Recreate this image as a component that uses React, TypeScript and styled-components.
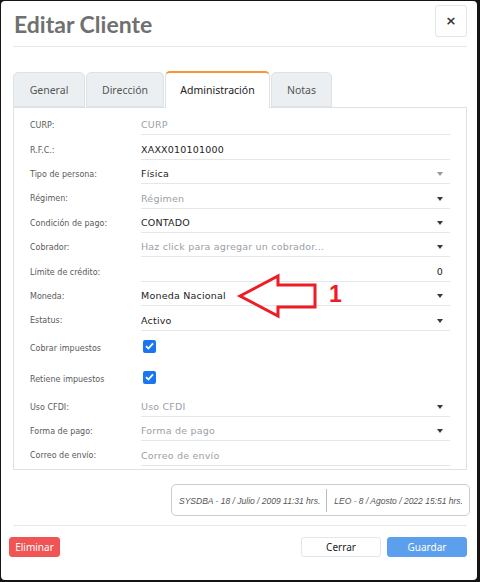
import React from 'react';
import styled, { createGlobalStyle } from 'styled-components';

const GlobalStyle = createGlobalStyle`
    html, body {
        margin: 0;
        padding: 0;
        background: #141414;
    }
    * {
        box-sizing: border-box;
    }
`;

const Backdrop = styled.div`
    width: 480px;
    height: 582px;
    padding: 1px 3px 2px 1px;
`;

const Modal = styled.div`
    position: relative;
    height: 100%;
    background: #fff;
    border-radius: 4px;
    padding: 0 10px 0 12px;
    display: flex;
    flex-direction: column;
`;

const Header = styled.div`
    display: flex;
    justify-content: space-between;
    align-items: flex-start;
    height: 46px;
    border-bottom: 1px solid #e6e9eb;
`;

const Title = styled.h1`
    margin: 9px 0 0 1px;
    font-family: Lato, "Open Sans", sans-serif;
    font-size: 23px;
    font-weight: 700;
    color: #707070;
    letter-spacing: 0;
`;

const CloseButton = styled.button`
    margin: 4px 0 0 0;
    width: 32px;
    height: 32px;
    border: 1px solid #e4e4e4;
    border-radius: 3px;
    background: #fff;
    font-family: "DejaVu Sans", sans-serif;
    font-size: 13px;
    font-weight: 700;
    color: #333;
    padding: 0;
    line-height: 30px;
`;

const Tabs = styled.div`
    display: flex;
    gap: 1px;
    margin-top: 24px;
    height: 36px;
    align-items: flex-end;
`;

const Tab = styled.div<{ $active?: boolean; $w: number }>`
    width: ${p => p.$w}px;
    height: ${p => (p.$active ? 37 : 35)}px;
    margin-bottom: ${p => (p.$active ? -1 : 0)}px;
    position: relative;
    z-index: ${p => (p.$active ? 2 : 1)};
    display: flex;
    align-items: center;
    justify-content: center;
    padding-bottom: ${p => (p.$active ? 2 : 0)}px;
    background: ${p => (p.$active ? '#fff' : '#eceff1')};
    border: 1px solid #dce2e5;
    border-top: ${p => (p.$active ? '2px solid #fb9533' : '1px solid #dce2e5')};
    border-bottom: ${p => (p.$active ? 'none' : '1px solid #dce2e5')};
    border-radius: 5px 5px 0 0;
    font-family: "Noto Sans", sans-serif;
    font-size: 10.5px;
    color: ${p => (p.$active ? '#222' : '#555')};
`;

const Panel = styled.div`
    border: 1px solid #dce2e5;
    height: 363px;
    padding: 3px 16px 0 16px;
`;

const Row = styled.div<{ $h?: number }>`
    display: grid;
    grid-template-columns: 111px 1fr;
    height: ${p => p.$h ?? 24.4}px;
    align-items: center;
`;

const Label = styled.div`
    font-family: "DejaVu Sans", sans-serif;
    font-size: 8px;
    color: #5a5a5a;
    padding-top: 5px;
    white-space: nowrap;
`;

const Field = styled.div<{ $placeholder?: boolean; $align?: string }>`
    height: 100%;
    display: flex;
    align-items: flex-end;
    justify-content: ${p => p.$align ?? 'space-between'};
    border-bottom: 1px solid #e3e7e8;
    padding: 0 7px 3px 0;
    font-family: "DejaVu Sans", sans-serif;
    font-size: 9.5px;
    letter-spacing: 0.2px;
    line-height: 12px;
    color: ${p => (p.$placeholder ? '#9aa0a6' : '#1d1d1d')};
`;

const Caret = styled.span<{ $light?: boolean }>`
    width: 0;
    height: 0;
    margin-bottom: 4px;
    border-left: 3.5px solid transparent;
    border-right: 3.5px solid transparent;
    border-top: 4px solid ${p => (p.$light ? '#9a9a9a' : '#3a3a3a')};
`;

const CheckBox = styled.span`
    width: 13px;
    height: 13px;
    margin-left: 2px;
    border-radius: 2px;
    background: #1976f2;
    display: flex;
    align-items: center;
    justify-content: center;
`;

const AuditBox = styled.div`
    align-self: flex-end;
    margin: 14px -3px 0 0;
    width: 299px;
    height: 32px;
    border: 1px solid #c9cdcf;
    border-radius: 5px;
    display: flex;
    align-items: center;
    font-family: "Liberation Sans", Arial, sans-serif;
    font-style: italic;
    font-size: 8.5px;
    color: #555;
`;

const AuditPart = styled.div<{ $divider?: boolean }>`
    flex: ${p => (p.$divider ? 1 : 'none')};
    text-align: center;
    white-space: nowrap;
    padding: 1px 6px 0 7px;
    border-left: ${p => (p.$divider ? '1px solid #bbb' : 'none')};
    line-height: 22px;
`;

const Footer = styled.div`
    margin-top: 9px;
    border-top: 1px solid #e6e9eb;
    padding-top: 11px;
    display: flex;
    align-items: center;
`;

const Button = styled.button<{ $kind: 'danger' | 'default' | 'primary' }>`
    height: 20px;
    width: ${p => (p.$kind === 'danger' ? 51 : 80)}px;
    margin-left: ${p => (p.$kind === 'danger' ? '-4px' : p.$kind === 'primary' ? '6px' : 'auto')};
    border-radius: 3px;
    padding: 0;
    font-family: "Noto Sans", sans-serif;
    font-size: 10px;
    border: 1px solid ${p => (p.$kind === 'danger' ? '#f05455' : p.$kind === 'primary' ? '#5c9fec' : '#e3e6e8')};
    background: ${p => (p.$kind === 'danger' ? '#f05455' : p.$kind === 'primary' ? '#5c9fec' : '#fff')};
    color: ${p => (p.$kind === 'default' ? '#222' : '#fff')};
`;

const Annotation = styled.svg`
    position: absolute;
    left: 226px;
    top: 264px;
    overflow: visible;
`;

const AnnotationNumber = styled.text`
    font-family: "Liberation Sans", Arial, sans-serif;
    font-size: 23px;
    font-weight: 700;
    fill: #ee1c25;
`;

type FieldDef = {
    label: string;
    value: string;
    placeholder?: boolean;
    caret?: boolean;
    lightCaret?: boolean;
    align?: string;
};

const topFields: FieldDef[] = [
    { label: 'CURP:', value: 'CURP', placeholder: true },
    { label: 'R.F.C.:', value: 'XAXX010101000' },
    { label: 'Tipo de persona:', value: 'Física', caret: true, lightCaret: true },
    { label: 'Régimen:', value: 'Régimen', placeholder: true, caret: true },
    { label: 'Condición de pago:', value: 'CONTADO', caret: true },
    { label: 'Cobrador:', value: 'Haz click para agregar un cobrador...', placeholder: true, caret: true },
    { label: 'Límite de crédito:', value: '0', align: 'flex-end' },
    { label: 'Moneda:', value: 'Moneda Nacional', caret: true },
    { label: 'Estatus:', value: 'Activo', caret: true },
];

const bottomFields: FieldDef[] = [
    { label: 'Uso CFDI:', value: 'Uso CFDI', placeholder: true, caret: true },
    { label: 'Forma de pago:', value: 'Forma de pago', placeholder: true, caret: true },
    { label: 'Correo de envío:', value: 'Correo de envío', placeholder: true },
];

const FieldRow: React.FC<{ f: FieldDef }> = ({ f }) => (
    <Row>
        <Label>{f.label}</Label>
        <Field $placeholder={f.placeholder} $align={f.align}>
            <span>{f.value}</span>
            {f.caret && <Caret $light={f.lightCaret} />}
        </Field>
    </Row>
);

const Check = () => (
    <CheckBox>
        <svg width="9" height="8" viewBox="0 0 9 8">
            <path d="M1 4.2 L3.4 6.5 L8 1.3" fill="none" stroke="#fff" strokeWidth="1.8" />
        </svg>
    </CheckBox>
);

export default function App() {
    return (
        <>
            <GlobalStyle />
            <Backdrop>
                <Modal>
                    <Header>
                        <Title>Editar Cliente</Title>
                        <CloseButton type="button" aria-label="Close">×</CloseButton>
                    </Header>

                    <Tabs>
                        <Tab $w={72}>General</Tab>
                        <Tab $w={78}>Dirección</Tab>
                        <Tab $w={105} $active>Administración</Tab>
                        <Tab $w={61}>Notas</Tab>
                    </Tabs>

                    <Panel>
                        {topFields.map(f => <FieldRow key={f.label} f={f} />)}
                        <Row $h={31}>
                            <Label>Cobrar impuestos</Label>
                            <div><Check /></div>
                        </Row>
                        <Row $h={31}>
                            <Label>Retiene impuestos</Label>
                            <div><Check /></div>
                        </Row>
                        {bottomFields.map(f => <FieldRow key={f.label} f={f} />)}
                    </Panel>

                    <AuditBox>
                        <AuditPart>SYSDBA - 18 / Julio / 2009 11:31 hrs.</AuditPart>
                        <AuditPart $divider>LEO - 8 / Agosto / 2022 15:51 hrs.</AuditPart>
                    </AuditBox>

                    <Footer>
                        <Button $kind="danger">Eliminar</Button>
                        <Button $kind="default">Cerrar</Button>
                        <Button $kind="primary">Guardar</Button>
                    </Footer>

                    <Annotation width="130" height="60">
                        <path
                            d="M13 31 L51 11 L51 20 L88 20 L88 42 L51 42 L51 51 Z"
                            fill="none"
                            stroke="#ee1c25"
                            strokeWidth="3"
                            strokeLinejoin="miter"
                        />
                        <AnnotationNumber x="102" y="37">1</AnnotationNumber>
                    </Annotation>
                </Modal>
            </Backdrop>
        </>
    );
}
